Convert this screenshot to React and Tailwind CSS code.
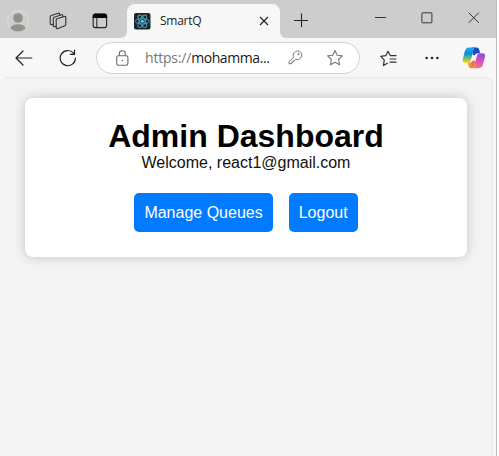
import React from "react";

const UI = "font-['Open_Sans','Noto_Sans',sans-serif]";

function TabCurve({ flip }) {
  return (
    <svg width="7" height="7" viewBox="0 0 7 7" className={flip ? "self-end -scale-x-100" : "self-end"}>
      <path d="M7 0V7H0C5 7 7 4 7 0Z" fill="#f7f7f7" />
    </svg>
  );
}

function Profile() {
  return (
    <svg width="22" height="22" viewBox="0 0 22 22" className="mt-[10px] shrink-0">
      <defs>
        <clipPath id="avatar"><circle cx="11" cy="11" r="10.5" /></clipPath>
      </defs>
      <circle cx="11" cy="11" r="10.5" fill="#d0cecb" stroke="#dddbd8" />
      <g clipPath="url(#avatar)" fill="#92908d">
        <circle cx="11" cy="8" r="4.8" />
        <ellipse cx="11" cy="19" rx="7.8" ry="4.8" />
      </g>
    </svg>
  );
}

function Workspaces() {
  return (
    <svg width="18" height="18" viewBox="0 0 18 18" fill="none" stroke="#333" strokeWidth="1.1" strokeLinejoin="round" strokeLinecap="round" className="ml-[20px] mt-3 shrink-0">
      <path d="M8 6.8 15.3 4.5Q16.8 4.1 16.8 5.5V12.2Q16.8 13.4 15.8 13.8L9 16.5Q7.2 17 7.2 15.3V8Q7.2 7.1 8 6.8Z" />
      <path d="M13.7 4.8V3.6Q13.7 2.4 12.4 2.8L5.2 5.2Q4.3 5.6 4.3 6.5V13.4Q4.3 15 5.8 14.7L7.1 14.3" />
      <path d="M10.7 3.2V2.1Q10.7.8 9.4 1.2L2.2 3.6Q1.2 4 1.2 5V11.6Q1.2 13 2.7 12.7L4.2 12.2" />
    </svg>
  );
}

function VerticalTabs() {
  return (
    <svg width="16" height="16" viewBox="0 0 16 16" fill="none" stroke="#222" className="ml-[25px] mt-[13px] shrink-0">
      <rect x="1.2" y="1.2" width="13.4" height="13.4" rx="2.2" strokeWidth="1.1" />
      <path d="M.7 5V3Q.7.5 3 .5H12.8Q15.1.5 15.1 3V5Z" fill="#050505" stroke="none" />
      <path d="M4.8 4.5V14.5" />
    </svg>
  );
}

function ReactMark() {
  return (
    <svg width="17" height="17" viewBox="0 0 17 17" className="shrink-0">
      <rect width="16.5" height="16.5" rx="2" fill="#202329" />
      <g fill="none" stroke="#4ca9c2" strokeWidth="0.9">
        <ellipse cx="8.3" cy="8.3" rx="7" ry="2.7" />
        <ellipse cx="8.3" cy="8.3" rx="7" ry="2.7" transform="rotate(60 8.3 8.3)" />
        <ellipse cx="8.3" cy="8.3" rx="7" ry="2.7" transform="rotate(120 8.3 8.3)" />
      </g>
      <circle cx="8.3" cy="8.3" r="1.5" fill="#61dafb" />
    </svg>
  );
}

function Copilot() {
  return (
    <svg width="24" height="24" viewBox="0 0 24 24" className="ml-[23px] shrink-0">
      <defs>
        <linearGradient id="cpLeft" x1="0" y1="0" x2="0" y2="1">
          <stop offset="0.1" stopColor="#17a7ed" />
          <stop offset="0.4" stopColor="#1685d8" />
          <stop offset="0.65" stopColor="#55b987" />
          <stop offset="0.95" stopColor="#f3cf17" />
        </linearGradient>
        <linearGradient id="cpRight" x1="0.6" y1="0" x2="0.3" y2="1">
          <stop offset="0" stopColor="#8e4be8" />
          <stop offset="0.5" stopColor="#dc4fb5" />
          <stop offset="1" stopColor="#ff7d61" />
        </linearGradient>
        <linearGradient id="cpFoot" x1="0" y1="0" x2="1" y2="0">
          <stop offset="0" stopColor="#f5b51b" />
          <stop offset="1" stopColor="#f3564f" />
        </linearGradient>
      </defs>
      <path d="M10 1.6H14.7Q16.7 1.6 17.3 4L18.1 7.2H15.5Q13.5 7.2 12.7 9.3L11 9Z" fill="#1c48c5" />
      <path d="M5.3 16.5H8.5L11 14.6 13.3 15 12 20Q11 22 9.5 22.3 7.3 22.3 6.7 20.5Z" fill="url(#cpFoot)" />
      <path d="M7.6 1.6H13.4Q12 2 11.3 4.7L9.1 13.3Q8.2 16.8 5.8 16.8H3.5Q-.1 16.8.9 12.5L2.9 5Q3.9 1.6 7.6 1.6Z" fill="url(#cpLeft)" />
      <path d="M15.8 22.3H9.7Q11.7 22 12.4 19.2L14.6 10.7Q15.5 7.2 18.2 7.2H20.3Q23.9 7.2 22.8 11.5L20.8 19Q19.7 22.3 15.8 22.3Z" fill="url(#cpRight)" />
    </svg>
  );
}

function TitleBar() {
  return (
    <div className="flex h-[38px] items-start bg-[#cdcdcd] pl-[7px]">
      <Profile />
      <Workspaces />
      <VerticalTabs />
      <div className="ml-[12px] flex h-[38px] shrink-0">
        <TabCurve />
        <div className="mt-1 flex w-[153px] items-center rounded-t-lg bg-[#f7f7f7] pl-[7px]">
          <ReactMark />
          <span className={`${UI} ml-[9px] w-[99px] text-[12px] leading-4 tracking-[-0.25px] text-[#222]`}>SmartQ</span>
          <svg width="10" height="10" viewBox="0 0 10 10" className="shrink-0" stroke="#222" strokeWidth="1.2" fill="none">
            <path d="M1 1 9 9M9 1 1 9" />
          </svg>
        </div>
        <TabCurve flip />
      </div>
      <svg width="14" height="14" viewBox="0 0 14 14" stroke="#222" strokeWidth="1.1" className="ml-[7px] mt-[13px] shrink-0">
        <path d="M0 7.5H14M7.5 0.5V14" />
      </svg>
      <div className="ml-[66px] mt-[11px] flex shrink-0">
        <svg width="12" height="14" viewBox="0 0 12 14" stroke="#333"><path d="M1 6.5H12" /></svg>
        <svg width="12" height="14" viewBox="0 0 12 14" stroke="#333" fill="none" className="ml-[35px]"><rect x=".9" y="1.8" width="10" height="10" rx=".6" /></svg>
        <svg width="12" height="14" viewBox="0 0 12 14" stroke="#333" fill="none" className="ml-[35px]"><path d="M.7 1.7 10.8 11.8M10.8 1.7.7 11.8" /></svg>
      </div>
    </div>
  );
}

function AddressBar() {
  return (
    <div className="flex h-8 w-[264px] shrink-0 items-center rounded-full border border-[#d2d2d2] bg-white pl-[19px]">
      <svg width="13" height="16" viewBox="0 0 13 16" fill="none" stroke="#666" strokeWidth="1.1" className="shrink-0">
        <rect x=".7" y="5.7" width="11.2" height="9.5" rx="1.7" />
        <path d="M3.4 5.5V3.5Q3.4.8 6.3.8T9.2 3.5V5.5" />
        <circle cx="6.3" cy="10.5" r=".7" fill="#555" stroke="none" />
      </svg>
      <span className={`${UI} ml-[16px] w-[125px] shrink-0 whitespace-nowrap text-[14px] leading-5 tracking-[-0.42px] text-[#191919]`}>
        <span className="tracking-[-0.2px] text-[#777]">https://</span>mohamma...
      </span>
      <svg width="15" height="15" viewBox="0 0 15 15" fill="none" stroke="#777" strokeWidth="1" strokeLinejoin="round" className="ml-[18px] shrink-0">
        <path d="M5.4 7.6C4.4 3.8 6.7 1 9.7 1 12.1 1 13.7 2.7 13.7 5 13.7 8 11 10 8 9.4L6.7 10.6H5.2V12H3.8V13.7H1V11.6Z" />
        <circle cx="10.5" cy="4.2" r=".7" />
      </svg>
      <svg width="18" height="18" viewBox="0 0 18 18" fill="none" stroke="#777" strokeWidth="1.1" strokeLinejoin="round" className="ml-[23px] shrink-0">
        <path d="M9 1.5 11.2 6.2 16.4 6.9 12.6 10.5 13.6 15.8 9 13.2 4.4 15.8 5.4 10.5 1.6 6.9 6.8 6.2Z" />
      </svg>
    </div>
  );
}

function Toolbar() {
  return (
    <div className="flex h-[39px] items-center bg-[#f7f7f7] pl-[15px]">
      <svg width="18" height="16" viewBox="0 0 18 16" fill="none" stroke="#222" strokeWidth="1.2" strokeLinecap="round" strokeLinejoin="round" className="shrink-0">
        <path d="M8 1 1 8 8 15M1 8H16.8" />
      </svg>
      <svg width="18" height="18" viewBox="0 0 18 18" fill="none" stroke="#222" strokeWidth="1.2" strokeLinecap="round" strokeLinejoin="round" className="ml-[26px] mr-[19px] shrink-0">
        <path d="M16.4 9A7.6 7.6 0 1 1 14.5 4.1L15.3 5M15.5 1.2V5.3H11.4" />
      </svg>
      <AddressBar />
      <svg width="17" height="17" viewBox="0 0 17 17" fill="none" stroke="#333" strokeWidth="1.2" strokeLinejoin="round" strokeLinecap="round" className="ml-[20px] mt-px shrink-0">
        <path d="M11.3 5.7H10.4L8 1.3 5.8 5.7.8 6.4 4.3 10.1 3.4 15.6 7.5 13.3M11.3 5.7H16M10 9H16M10 12.2H16" />
      </svg>
      <svg width="14" height="4" viewBox="0 0 14 4" fill="#222" className="ml-[28px] shrink-0">
        <circle cx="1.6" cy="2" r="1.3" /><circle cx="7" cy="2" r="1.3" /><circle cx="12.4" cy="2" r="1.3" />
      </svg>
      <Copilot />
    </div>
  );
}

function Dashboard() {
  return (
    <main className="h-[379px] w-[493px] rounded-t-lg border-r border-t border-[#e8e8e8] bg-[#f3f3f3] pl-[25px] pr-[25px] pt-5 font-['Liberation_Sans',Arial,sans-serif]">
      <section className="flex h-[159px] flex-col items-center rounded-lg bg-white pt-5 shadow-[0_0_12px_rgba(0,0,0,0.2)]">
        <h1 className="text-[32px] font-bold leading-[36px] text-black">Admin Dashboard</h1>
        <p className="text-base leading-[18px] text-[#111]">Welcome, react1@gmail.com</p>
        <div className="mt-[21px] flex gap-4">
          <button className="h-[39px] rounded-[5px] bg-[#007bff] px-[10px] text-base leading-[18px] text-white">Manage Queues</button>
          <button className="h-[39px] rounded-[5px] bg-[#007bff] px-[10px] text-base leading-[18px] text-white">Logout</button>
        </div>
      </section>
    </main>
  );
}

export default function App() {
  return (
    <div className="h-[456px] w-[499px] overflow-hidden bg-white">
      <div className="h-[456px] w-[497px] border-r border-[#bdbdbd] bg-[#f7f7f7]">
        <TitleBar />
        <Toolbar />
        <Dashboard />
      </div>
    </div>
  );
}
